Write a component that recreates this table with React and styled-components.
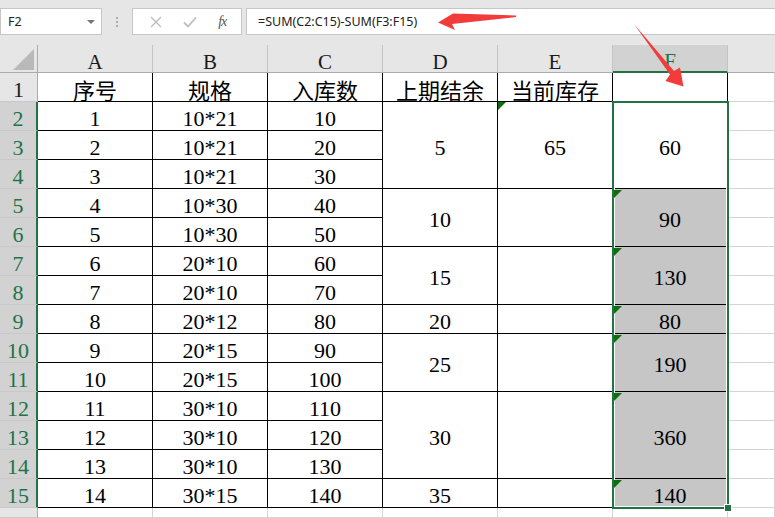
import styled, { createGlobalStyle } from 'styled-components';

const GlobalStyle = createGlobalStyle`
  html, body {
    margin: 0;
    padding: 0;
    background: #fff;
  }
  body {
    width: 775px;
    height: 518px;
    overflow: hidden;
  }
`;

const Page = styled.div`
  position: relative;
  width: 775px;
  height: 518px;
  overflow: hidden;
  background: #fff;
  display: flex;
  flex-direction: column;
`;

/* ---------- formula bar ---------- */

const FormulaBar = styled.div`
  display: flex;
  align-items: flex-start;
  height: 45px;
  box-sizing: border-box;
  padding-top: 8px;
  background: #e6e6e6;
  flex-shrink: 0;
`;

const NameBox = styled.div`
  box-sizing: border-box;
  width: 102px;
  height: 27px;
  background: #fff;
  border: 1px solid #c6c6c6;
  display: flex;
  align-items: center;
  justify-content: space-between;
  padding: 0 6px 0 7px;
  font-family: "Noto Sans", "Liberation Sans", sans-serif;
  font-size: 12.5px;
  color: #222;
`;

const Caret = styled.span`
  width: 0;
  height: 0;
  border-left: 4px solid transparent;
  border-right: 4px solid transparent;
  border-top: 4px solid #777;
`;

const Grip = styled.div`
  width: 30px;
  height: 27px;
  display: flex;
  flex-direction: column;
  align-items: center;
  justify-content: center;
  gap: 2px;
  > i {
    display: block;
    width: 2px;
    height: 2px;
    background: #adadad;
  }
`;

const FxBox = styled.div`
  box-sizing: border-box;
  width: 110px;
  height: 27px;
  background: #fff;
  border: 1px solid #c6c6c6;
  display: flex;
  align-items: center;
  justify-content: space-around;
  padding: 0 4px 0 6px;
`;

const Fx = styled.span`
  font-family: "Liberation Serif", serif;
  font-style: italic;
  font-size: 14px;
  color: #555;
  letter-spacing: -1px;
`;

const FormulaInput = styled.div`
  box-sizing: border-box;
  flex: 1;
  margin-left: 4px;
  margin-right: -2px;
  height: 27px;
  background: #fff;
  border: 1px solid #c6c6c6;
  display: flex;
  align-items: center;
  padding-left: 11px;
  font-family: "Noto Sans", "Liberation Sans", sans-serif;
  font-size: 12.5px;
  color: #222;
`;

/* ---------- sheet ---------- */

const Sheet = styled.div`
  flex: 1;
  display: grid;
  grid-template-columns: 38px repeat(6, 115px) 1fr;
  grid-template-rows: 28px repeat(15, 29px) 1fr;
`;

const Corner = styled.div`
  grid-row: 1;
  grid-column: 1;
  background: #e6e6e6;
  border-right: 1px solid #ababab;
  border-bottom: 1px solid #ababab;
  display: flex;
  align-items: flex-end;
  justify-content: flex-end;
  padding: 0 3px 2px 0;
  &::after {
    content: '';
    width: 0;
    height: 0;
    border-left: 21px solid transparent;
    border-bottom: 21px solid #b9b9b9;
  }
`;

const ColHead = styled.div`
  grid-row: 1;
  grid-column: ${(p) => p.$col};
  box-sizing: border-box;
  background: ${(p) => (p.$active ? '#d2d2d2' : '#e6e6e6')};
  border-right: 1px solid ${(p) => (p.$last ? 'transparent' : '#c4c4c4')};
  border-bottom: ${(p) => (p.$active ? '2px solid #217346' : '1px solid #ababab')};
  display: flex;
  align-items: center;
  justify-content: center;
  padding-top: ${(p) => (p.$active ? '6px' : '7px')};
  font-family: "Liberation Serif", serif;
  font-size: 21px;
  line-height: 17px;
  color: ${(p) => (p.$active ? '#217346' : '#1a1a1a')};
`;

const RowHead = styled.div`
  grid-row: ${(p) => p.$row};
  grid-column: 1;
  background: ${(p) => (p.$active ? '#d2d2d2' : '#e6e6e6')};
  border-bottom: 1px solid #c8c8c8;
  border-right: ${(p) => (p.$active ? '2px solid #217346' : '1px solid #ababab')};
  display: flex;
  align-items: center;
  justify-content: center;
  padding-top: 5px;
  font-family: "Liberation Serif", serif;
  font-size: 22px;
  line-height: 1;
  color: ${(p) => (p.$active ? '#217346' : '#1a1a1a')};
`;

const Cell = styled.div`
  grid-row: ${(p) => p.$row} / span ${(p) => p.$span || 1};
  grid-column: ${(p) => p.$col};
  position: relative;
  min-width: 0;
  display: flex;
  align-items: center;
  justify-content: center;
  padding-top: ${(p) => (p.$cjk ? '4px' : '5px')};
  background: ${(p) => (p.$fill ? '#c6c6c6' : '#fff')};
  border-right: 1px solid ${(p) => (p.$grid ? '#d4d4d4' : '#000')};
  border-bottom: 1px solid ${(p) => (p.$grid ? '#d4d4d4' : '#000')};
  font-family: "Liberation Serif", serif;
  font-size: 22px;
  line-height: 1;
  color: #000;
`;

const Han = styled.span`
  font-family: "Noto Sans CJK SC", "Noto Sans", sans-serif;
  font-size: 22px;
  line-height: 22px;
`;

const Flag = styled.span`
  position: absolute;
  top: ${(p) => (p.$inset ? '1px' : '0')};
  left: ${(p) => (p.$inset ? '1px' : '0')};
  z-index: 3;
  width: 0;
  height: 0;
  border-top: 8px solid #0b6f0b;
  border-right: 8px solid transparent;
`;

const Selection = styled.div`
  grid-row: 3 / span 14;
  grid-column: 7;
  margin: -1px;
  position: relative;
  z-index: 2;
  pointer-events: none;
  border: 2px solid #217346;
  box-shadow: inset 0 0 0 1px #fff;
`;

const FillHandle = styled.span`
  position: absolute;
  right: -4px;
  bottom: -4px;
  width: 6px;
  height: 6px;
  background: #217346;
  box-shadow: 0 0 0 1px #fff;
`;

const Arrows = styled.svg`
  position: absolute;
  inset: 0;
  width: 775px;
  height: 518px;
  pointer-events: none;
  z-index: 5;
`;

const items = [
  ['1', '10*21', '10'],
  ['2', '10*21', '20'],
  ['3', '10*21', '30'],
  ['4', '10*30', '40'],
  ['5', '10*30', '50'],
  ['6', '20*10', '60'],
  ['7', '20*10', '70'],
  ['8', '20*12', '80'],
  ['9', '20*15', '90'],
  ['10', '20*15', '100'],
  ['11', '30*10', '110'],
  ['12', '30*10', '120'],
  ['13', '30*10', '130'],
  ['14', '30*15', '140'],
];

// merged blocks in D, E, F (start is the sheet row number)
const groups = [
  { start: 2, span: 3, d: '5', e: '65', f: '60', eFlag: true },
  { start: 5, span: 2, d: '10', f: '90' },
  { start: 7, span: 2, d: '15', f: '130' },
  { start: 9, span: 1, d: '20', f: '80' },
  { start: 10, span: 2, d: '25', f: '190' },
  { start: 12, span: 3, d: '30', f: '360' },
  { start: 15, span: 1, d: '35', f: '140' },
];

const letters = ['A', 'B', 'C', 'D', 'E', 'F'];
const headers = ['序号', '规格', '入库数', '上期结余', '当前库存', ''];

export default function App() {
  return (
    <Page>
      <GlobalStyle />
      <FormulaBar>
        <NameBox>
          F2
          <Caret />
        </NameBox>
        <Grip>
          <i />
          <i />
          <i />
        </Grip>
        <FxBox>
          <svg width="12" height="12" viewBox="0 0 12 12">
            <path d="M1 1L11 11M11 1L1 11" stroke="#bdbdbd" strokeWidth="1.4" fill="none" />
          </svg>
          <svg width="14" height="12" viewBox="0 0 14 12">
            <path d="M1 6.5L5 10.5L13 1.5" stroke="#bdbdbd" strokeWidth="1.8" fill="none" />
          </svg>
          <Fx>fx</Fx>
        </FxBox>
        <FormulaInput>=SUM(C2:C15)-SUM(F3:F15)</FormulaInput>
      </FormulaBar>

      <Sheet>
        <Corner />
        {letters.map((l, i) => (
          <ColHead key={l} $col={i + 2} $active={l === 'F'}>
            {l}
          </ColHead>
        ))}
        <ColHead $col={8} $last />

        <RowHead $row={2}>1</RowHead>
        {headers.map((h, i) => (
          <Cell key={i} $row={2} $col={i + 2} $cjk>
            {h && <Han>{h}</Han>}
          </Cell>
        ))}
        <Cell $row={2} $col={8} $grid />

        {items.map((it, i) => {
          const row = i + 3;
          return [
            <RowHead key={`h${row}`} $row={row} $active>
              {i + 2}
            </RowHead>,
            ...it.map((v, c) => (
              <Cell key={`c${row}-${c}`} $row={row} $col={c + 2}>
                {v}
              </Cell>
            )),
            <Cell key={`g${row}`} $row={row} $col={8} $grid />,
          ];
        })}

        {groups.map((g) => {
          const row = g.start + 1;
          const tinted = g.start > 2;
          return [
            <Cell key={`d${row}`} $row={row} $span={g.span} $col={5}>
              {g.d}
            </Cell>,
            <Cell key={`e${row}`} $row={row} $span={g.span} $col={6}>
              {g.eFlag && <Flag />}
              {g.e}
            </Cell>,
            <Cell key={`f${row}`} $row={row} $span={g.span} $col={7} $fill={tinted}>
              {tinted && <Flag $inset />}
              {g.f}
            </Cell>,
          ];
        })}

        <RowHead $row={17} />
        {[2, 3, 4, 5, 6, 7, 8].map((c) => (
          <Cell key={`r16-${c}`} $row={17} $col={c} $grid />
        ))}

        <Selection>
          <FillHandle />
        </Selection>
      </Sheet>

      <Arrows viewBox="0 0 775 518">
        <polygon points="516,15.5 453,13.5 438,22.5 455,30 452,24 516,17" fill="#f23b3b" />
        <polygon points="634,24 674,71 680,67.5 683.5,86.5 665.5,81 670,74.5" fill="#f23b3b" />
      </Arrows>
    </Page>
  );
}
